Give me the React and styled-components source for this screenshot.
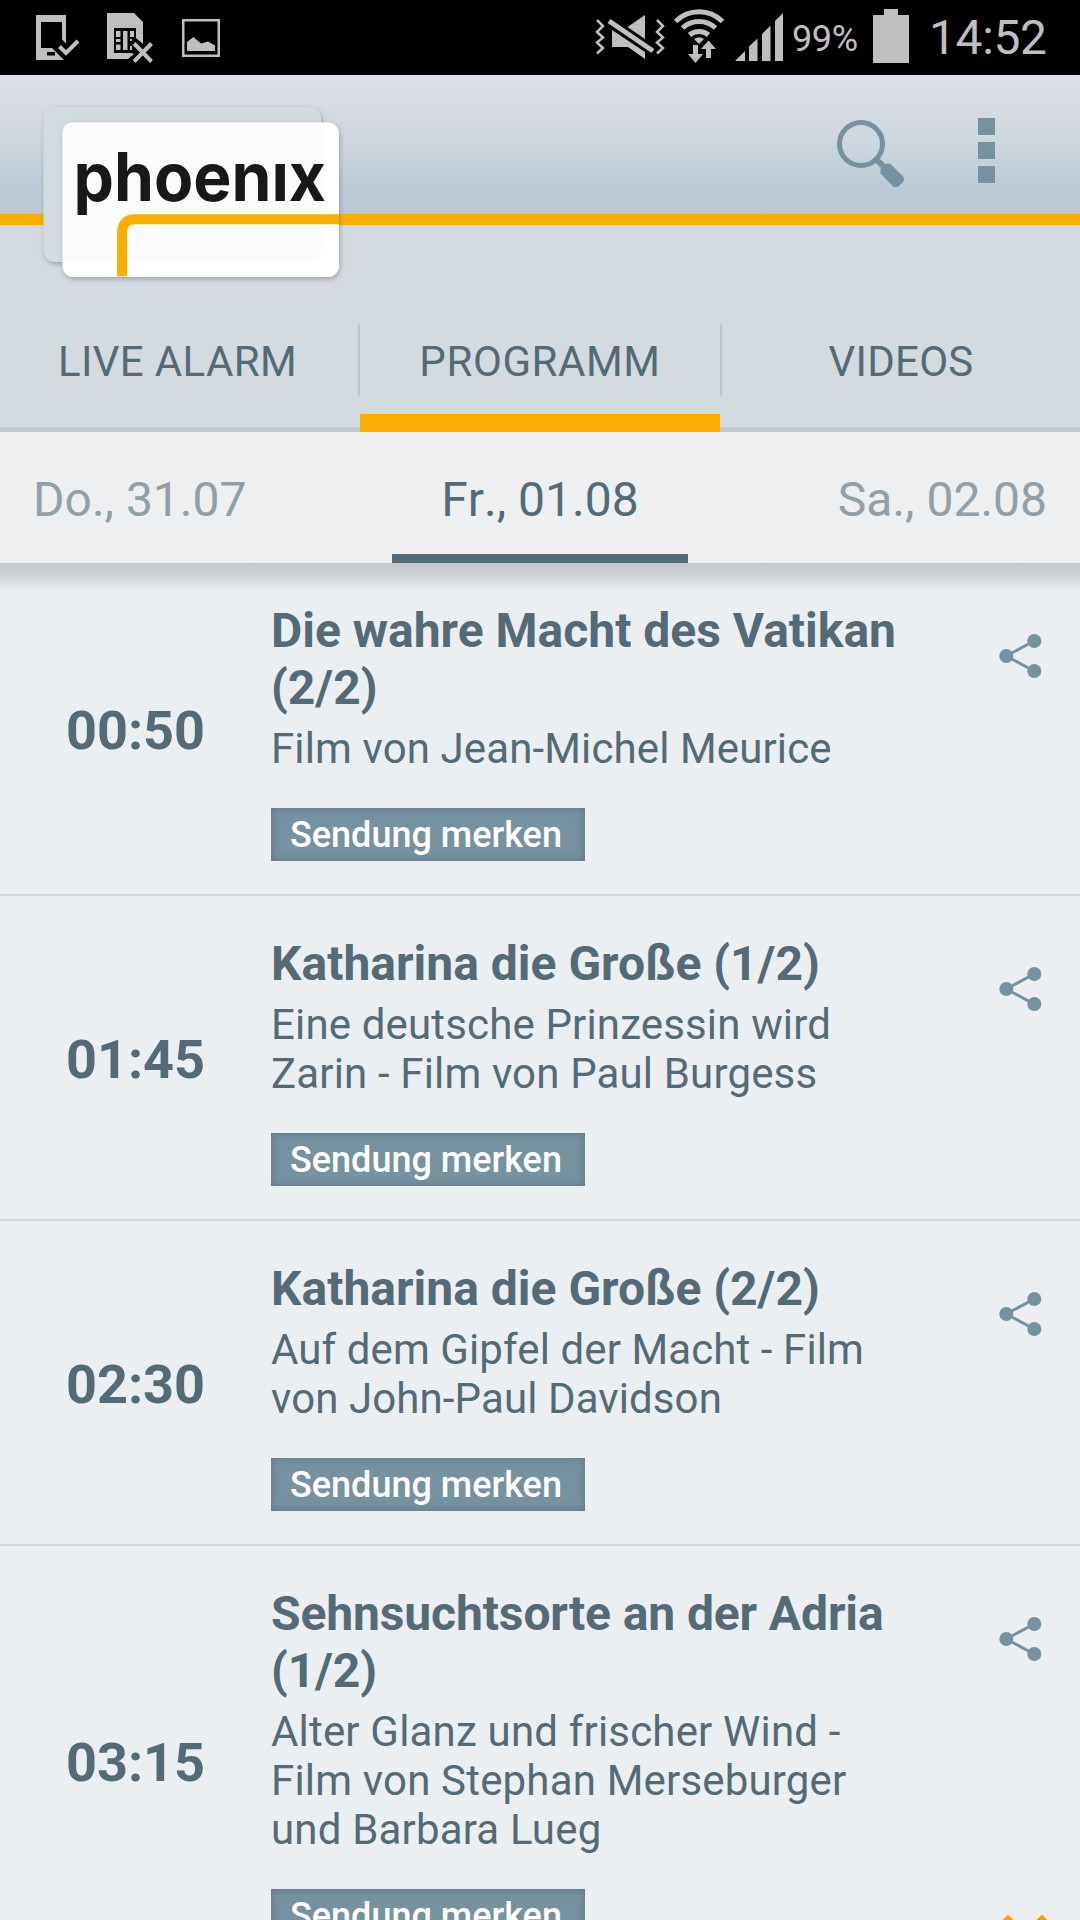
import React from 'react';
import styled, { createGlobalStyle } from 'styled-components';

const GlobalStyle = createGlobalStyle`
    * {
        box-sizing: border-box;
    }
    body {
        margin: 0;
        background: #ebeff2;
        font-family: Roboto, "Noto Sans", sans-serif;
    }
    svg {
        display: block;
        flex: none;
    }
`;

const Screen = styled.div`
    position: relative;
    width: 1080px;
    height: 1920px;
    overflow: hidden;
    display: flex;
    flex-direction: column;
    background: #ebeff2;
    color: #546a77;
`;

const StatusBar = styled.div`
    height: 75px;
    flex: none;
    display: flex;
    justify-content: space-between;
    padding: 0 35px 0 36px;
    background: #000000;
    color: #bfbfbf;
`;

const StatusGroup = styled.div`
    display: flex;
    align-items: flex-start;
`;

const StatusIcon = styled.svg`
    margin-left: ${props => props.$gap || 0}px;
`;

const StatusText = styled.div`
    width: ${props => props.$width}px;
    margin-left: ${props => props.$gap}px;
    padding-top: ${props => props.$top}px;
    font-size: ${props => props.$size}px;
    line-height: 1;
    letter-spacing: -0.4px;
    white-space: nowrap;
`;

const Header = styled.div`
    position: relative;
    height: 150px;
    flex: none;
    display: flex;
    justify-content: flex-end;
    padding: 43px 85px 0 0;
    gap: 74px;
    background: linear-gradient(#dcdfe6 0%, #d7dce3 20%, #cdd7de 47%, #bfccd7 76%, #bac8d4 100%);
    border-bottom: 11px solid #f9ae00;
`;

const Logo = styled.svg`
    position: absolute;
    left: 33px;
    top: 21px;
    z-index: 2;
`;

const Tabs = styled.div`
    height: 207px;
    flex: none;
    display: flex;
    align-items: stretch;
    background: #d3dae0;
`;

const Tab = styled.div`
    flex: 1;
    display: flex;
    flex-direction: column;
    justify-content: flex-end;
    border-bottom: ${props => props.$active ? "18px solid #f9ae00" : "5px solid #c2cbd1"};
`;

const TabLabel = styled.div`
    height: 72px;
    margin-bottom: ${props => props.$active ? "18px" : "31px"};
    padding: 2px ${props => props.$first ? "3px" : "0"} 0 0;
    display: flex;
    align-items: center;
    justify-content: center;
    font-size: 42px;
    letter-spacing: ${props => props.$spacing}px;
    border-left: ${props => props.$last ? "2px solid #bcc4c7" : "none"};
    border-right: ${props => props.$first ? "2px solid #bcc4c7" : "none"};
`;

const DateStrip = styled.div`
    height: 131px;
    flex: none;
    display: grid;
    grid-template-columns: 1fr 296px 1fr;
    padding: 0 33px;
    background: #edeff1;
`;

const DateItem = styled.div`
    display: flex;
    justify-content: ${props => props.$align || "center"};
    padding-top: 39px;
    font-size: 48px;
    line-height: 57px;
    font-kerning: none;
    white-space: nowrap;
    color: ${props => props.$active ? "#546a77" : "#91a0a8"};
    border-bottom: ${props => props.$active ? "9px solid #546a77" : "none"};
`;

const List = styled.div`
    position: relative;
    flex: 1;
    min-height: 0;
    overflow: hidden;
    &::before {
        content: "";
        position: absolute;
        top: 0;
        left: 0;
        right: 0;
        height: 30px;
        background: linear-gradient(#c2c8cc 0%, #cbd0d4 33%, #dce1e4 66%, #e7ebee 90%, #ebeff2 100%);
    }
`;

const Row = styled.div`
    display: grid;
    grid-template-columns: 271px 640px 1fr;
    border-bottom: 2px solid #d5d9dc;
`;

const Time = styled.div`
    display: flex;
    align-items: center;
    justify-content: center;
    padding-top: 4px;
    font-size: 54px;
    font-weight: 700;
`;

const Details = styled.div`
    padding: 39px 0 33px;
`;

const Title = styled.div`
    position: relative;
    font-size: 48px;
    line-height: 57px;
    font-weight: 700;
    letter-spacing: ${props => props.$spacing || 0}px;
`;

const Subtitle = styled.div`
    margin-top: 8px;
    font-size: 42px;
    line-height: 49px;
    letter-spacing: ${props => props.$spacing || 0}px;
`;

const RememberButton = styled.button`
    display: block;
    width: 314px;
    height: 53px;
    margin: 35px 0 0;
    padding: 2px 0 0 19px;
    border: none;
    background: #76919f;
    box-shadow: inset 0 0 7px 1px #5f7a87;
    color: #ffffff;
    font-family: inherit;
    font-size: 36px;
    font-weight: 500;
    line-height: 51px;
    text-align: left;
    white-space: nowrap;
`;

const ShareCell = styled.div`
    padding: 70px 0 0 87px;
`;

const CornerIcon = styled.svg`
    position: absolute;
    left: 1001px;
    top: 1913px;
`;

const PhoneCheckIcon = () => (
    <StatusIcon width="46" height="75" viewBox="36 0 46 75">
        <path fill="#bfbfbf" fillRule="evenodd" d="M36 15H66V43.5L62 39.5V22H41V48H52L64 60H36ZM47 52V55.5H55V52Z" />
        <path d="M59.5 46.5L66 53L78 41" fill="none" stroke="#bfbfbf" strokeWidth="4" />
    </StatusIcon>
);

const SimErrorIcon = () => (
    <StatusIcon $gap={24} width="48" height="75" viewBox="106 0 48 75">
        <path fill="#bfbfbf" d="M107 13H134L143 22V44L136 38V28H114V53H132L134 54L128 59H107Z" />
        <g fill="#bfbfbf">
            <path d="M116 31H120.500V37H116ZM116 39H120.500V42H116ZM116 44.500H120.500V50H116ZM123 31H127.500V50H123ZM130 31H134V37H130ZM130 39H132V41H130ZM130 46H132V50H130Z" />
        </g>
        <path d="M134 43.500L151.500 61.500M151.500 43.500L134 61.500" stroke="#bfbfbf" strokeWidth="4" />
    </StatusIcon>
);

const ImageIcon = () => (
    <StatusIcon $gap={28} width="38" height="75" viewBox="182 0 38 75">
        <rect x="183.250" y="20.250" width="35.500" height="35.500" fill="none" stroke="#bfbfbf" strokeWidth="2.500" />
        <path d="M187 51V42L193.500 37L201 43.500L208 41.500L215 45.500V51Z" fill="#bfbfbf" />
    </StatusIcon>
);

const MuteIcon = () => (
    <StatusIcon width="70" height="75" viewBox="595 0 70 75">
        <g fill="#bfbfbf">
            <path d="M645 15V39L627.500 27Z" />
            <path d="M612 30L645 52V59L628 47H612Z" />
        </g>
        <path d="M609 21L653 51" stroke="#bfbfbf" strokeWidth="5" />
        <path d="M597 20L603 26L597 32L603 37.500L597 42.500L603 48L597 53.500M657 20L663 26L657 32L663 37.500L657 42.500L663 48L657 53.500" fill="none" stroke="#bfbfbf" strokeWidth="2.500" />
    </StatusIcon>
);

const WifiIcon = () => (
    <StatusIcon $gap={9} width="50" height="75" viewBox="674 0 50 75">
        <g fill="none" stroke="#bfbfbf" strokeWidth="5">
            <path d="M675.500 21.500A33 33 0 0 1 722.500 21.500" />
            <path d="M682.500 28A24 24 0 0 1 715.500 28" />
            <path d="M689.500 35A14.500 14.500 0 0 1 708.500 35" />
        </g>
        <g fill="#bfbfbf">
            <path d="M694 39Q699 35.500 704 39L699 44Z" />
            <path d="M693 45H698V54H703L695.500 63L688 54H693Z" />
            <path d="M706 58V49H701L708.500 40.500L716 49H711V58Z" />
        </g>
    </StatusIcon>
);

const SignalIcon = () => (
    <StatusIcon $gap={11} width="48" height="75" viewBox="735 0 48 75">
        <path fill="#bfbfbf" d="M735 61L745 51V61ZM749 61V46.500L757.500 38.500V61ZM762 61V34L770.500 25.500V61ZM775 61V21L783 13V61Z" />
    </StatusIcon>
);

const BatteryIcon = () => (
    <StatusIcon $gap={15} width="36" height="75" viewBox="873 0 36 75">
        <path fill="#bfbfbf" d="M873 15H884V9H898V15H909V63H873Z" />
    </StatusIcon>
);

const SearchIcon = () => (
    <svg width="68" height="70" viewBox="836 117 68 70">
        <circle cx="861" cy="143" r="21.500" fill="none" stroke="#76919f" strokeWidth="5" />
        <path d="M876 158L886 168" stroke="#76919f" strokeWidth="6" />
        <path d="M884.500 163L890 162.500L903 175.500Q905 178 903 181L899 185Q896 187 893 185.500L880.500 172.500V168Z" fill="#76919f" />
    </svg>
);

const OverflowIcon = () => (
    <svg width="17" height="65" viewBox="0 0 17 65" fill="#76919f">
        <rect width="17" height="17" />
        <rect y="24" width="17" height="17" />
        <rect y="48" width="17" height="17" />
    </svg>
);

const ShareIcon = () => (
    <svg width="44" height="46" viewBox="998 633 44 46">
        <path d="M1034 641L1006.300 656L1034 671" fill="none" stroke="#76919f" strokeWidth="3" />
        <g fill="#76919f">
            <circle cx="1006.300" cy="656" r="7" />
            <circle cx="1034.300" cy="641" r="7" />
            <circle cx="1034.300" cy="671" r="7" />
        </g>
    </svg>
);

const PhoenixLogo = () => (
    <Logo width="320" height="195" viewBox="33 96 320 195">
        <defs>
            <filter id="cardShadow" x="-10%" y="-10%" width="120%" height="125%">
                <feDropShadow dx="1" dy="2" stdDeviation="2.500" floodColor="#5f7a87" floodOpacity="0.550" />
            </filter>
        </defs>
        <rect x="43.500" y="107" width="277.500" height="155" rx="12" fill="#d2dbe0" filter="url(#cardShadow)" />
        <rect x="62.500" y="122.500" width="276.500" height="154.500" rx="11" fill="#ffffff" filter="url(#cardShadow)" />
        <path d="M73.500 122.500H321V250Q321 262 309 262H62.500V133.500Q62.500 122.500 73.500 122.500Z" fill="#fafbfd" />
        <text x="73.500" y="200.500" fontFamily="Inter, sans-serif" fontWeight="700" fontSize="67" fill="#1a171b" textLength="252.500" lengthAdjust="spacingAndGlyphs">phoenıx</text>
        <path d="M122 276.500V234Q122 219.300 135 219.300H339" fill="none" stroke="#f9ae00" strokeWidth="10" />
    </Logo>
);

const shows = [
    {
        time: "00:50",
        title: "Die wahre Macht des Vatikan (2/2)",
        subtitle: "Film von Jean-Michel Meurice",
        subtitleSpacing: 0.12,
    },
    {
        time: "01:45",
        title: "Katharina die Große (1/2)",
        subtitle: "Eine deutsche Prinzessin wird Zarin - Film von Paul Burgess",
        subtitleSpacing: 0.15,
    },
    {
        time: "02:30",
        title: "Katharina die Große (2/2)",
        subtitle: "Auf dem Gipfel der Macht - Film von John-Paul Davidson",
        subtitleSpacing: 0.1,
    },
    {
        time: "03:15",
        title: "Sehnsuchtsorte an der Adria (1/2)",
        titleSpacing: -0.12,
        subtitle: "Alter Glanz und frischer Wind - Film von Stephan Merseburger und Barbara Lueg",
        subtitleSpacing: 0.18,
    },
];

const Show = ({ time, title, titleSpacing, subtitle, subtitleSpacing }) => {
    return (
        <Row>
            <Time>{time}</Time>
            <Details>
                <Title $spacing={titleSpacing}>{title}</Title>
                <Subtitle $spacing={subtitleSpacing}>{subtitle}</Subtitle>
                <RememberButton>Sendung merken</RememberButton>
            </Details>
            <ShareCell>
                <ShareIcon />
            </ShareCell>
        </Row>
    )
}

const App = () => {
    return (
        <Screen>
            <GlobalStyle />
            <StatusBar>
                <StatusGroup>
                    <PhoneCheckIcon />
                    <SimErrorIcon />
                    <ImageIcon />
                </StatusGroup>
                <StatusGroup>
                    <MuteIcon />
                    <WifiIcon />
                    <SignalIcon />
                    <StatusText $width={66} $gap={9} $top={21} $size={36}>99%</StatusText>
                    <BatteryIcon />
                    <StatusText $width={116} $gap={20} $top={14} $size={48}>14:52</StatusText>
                </StatusGroup>
            </StatusBar>
            <Header>
                <PhoenixLogo />
                <SearchIcon />
                <OverflowIcon />
            </Header>
            <Tabs>
                <Tab>
                    <TabLabel $first $spacing={0.37}>LIVE ALARM</TabLabel>
                </Tab>
                <Tab $active>
                    <TabLabel $active $spacing={0.6}>PROGRAMM</TabLabel>
                </Tab>
                <Tab>
                    <TabLabel $last $spacing={0.3}>VIDEOS</TabLabel>
                </Tab>
            </Tabs>
            <DateStrip>
                <DateItem $align="flex-start">Do., 31.07</DateItem>
                <DateItem $active>Fr., 01.08</DateItem>
                <DateItem $align="flex-end">Sa., 02.08</DateItem>
            </DateStrip>
            <List>
                {shows.map(show => <Show key={show.time} {...show} />)}
            </List>
            <CornerIcon width="50" height="7" viewBox="1001 1913 50 7" fill="#ff9c00">
                <path d="M1002.500 1920L1007 1915.500Q1008 1914.500 1009 1915.500L1013.500 1920Z" />
                <path d="M1036.500 1920L1041 1915.500Q1042 1914.500 1043 1915.500L1047.500 1920Z" />
            </CornerIcon>
        </Screen>
    )
}

export default App;
